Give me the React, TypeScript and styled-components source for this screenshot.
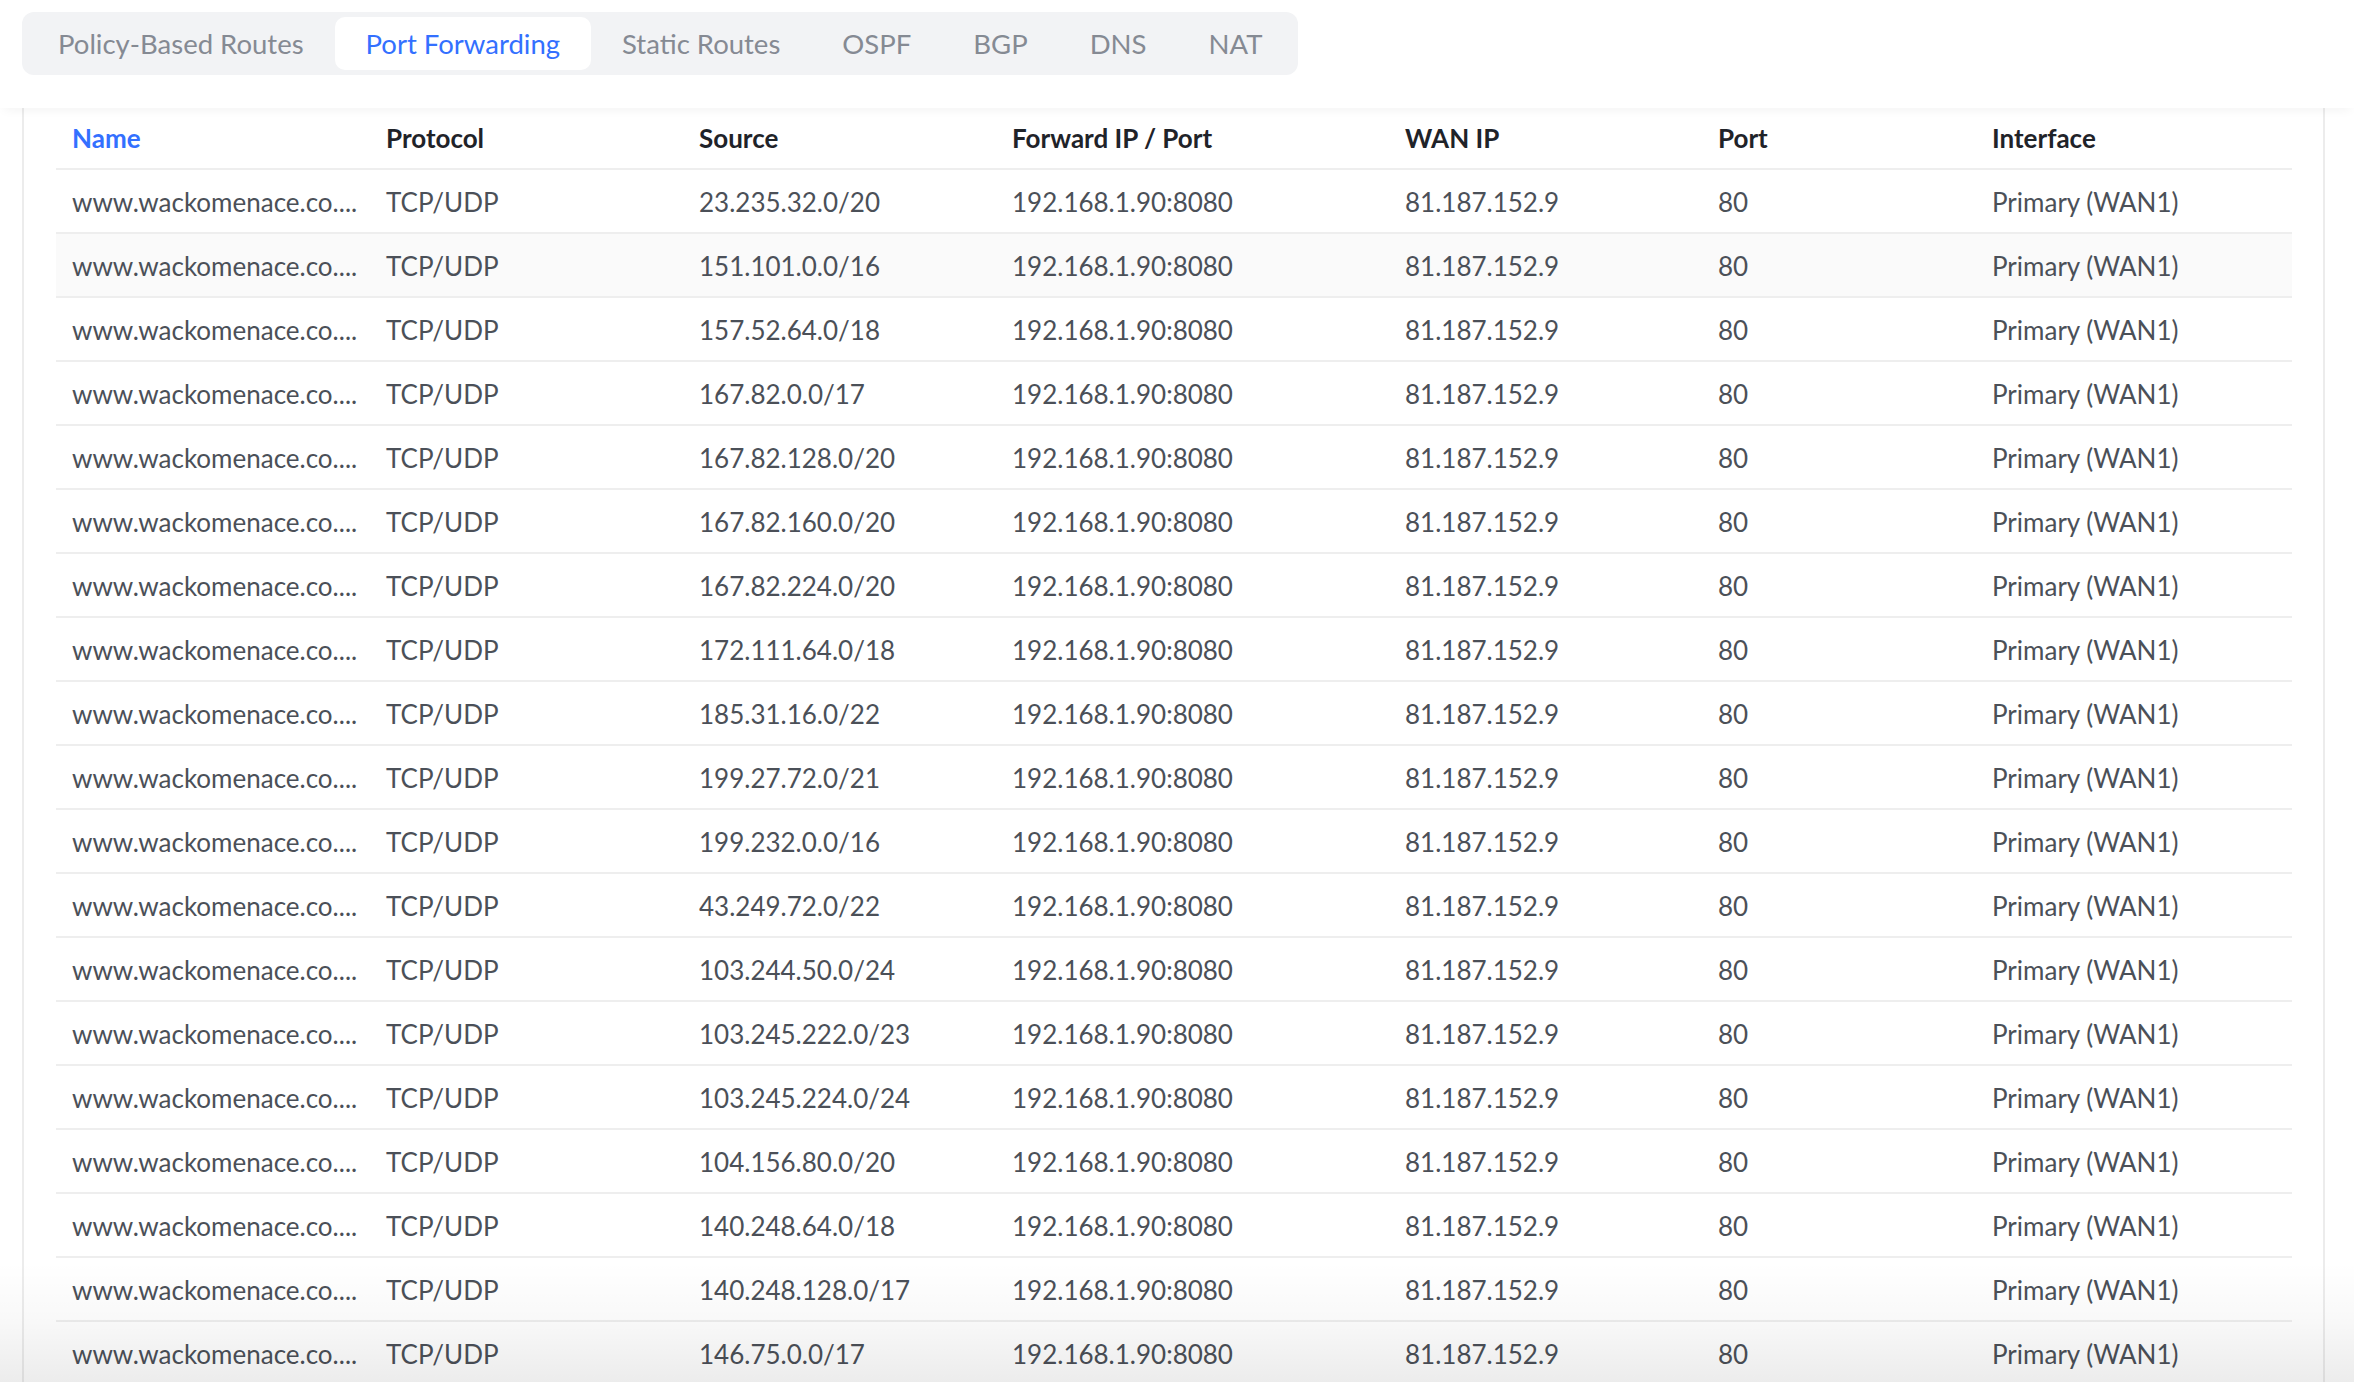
import React from "react";
import styled, { createGlobalStyle } from "styled-components";

const GlobalStyle = createGlobalStyle`
  html, body {
    margin: 0;
    padding: 0;
    background: #ffffff;
    font-family: Lato, "Open Sans", "Noto Sans", sans-serif;
    -webkit-font-smoothing: antialiased;
  }
  * { box-sizing: border-box; }
`;

const Page = styled.div`
  position: relative;
  width: 100%;
  height: 1382px;
  overflow: hidden;
  background: #ffffff;
`;

const TopBar = styled.header`
  position: relative;
  z-index: 1;
  height: 108px;
  padding: 12px 22px 0;
  background: #ffffff;
  box-shadow: 0 6px 10px -4px rgba(0, 0, 0, 0.05);
`;

const Tabs = styled.nav`
  display: inline-flex;
  align-items: center;
  height: 63px;
  padding: 5px;
  border-radius: 12px;
  background: #f2f3f5;
`;

const Tab = styled.button<{ $active?: boolean }>`
  height: 53px;
  padding: 0 31px;
  border: none;
  border-radius: 10px;
  background: ${(p) => (p.$active ? "#ffffff" : "transparent")};
  color: ${(p) => (p.$active ? "#3370ff" : "#858a93")};
  font-family: inherit;
  font-size: 27.5px;
  font-weight: 400;
  cursor: pointer;
  white-space: nowrap;
`;

const Panel = styled.section`
  margin-left: 22px;
  width: 2303px;
  height: calc(1382px - 108px);
  padding: 0 31px 0 32px;
  border-left: 2px solid #ececec;
  border-right: 2px solid #ececec;
`;

const COLS = "314px 313px 313px 393px 313px 274px 316px";

const HeadRow = styled.div`
  display: grid;
  grid-template-columns: ${COLS};
  align-items: center;
  height: 62px;
  border-bottom: 2px solid #eeeeee;
`;

const HeadCell = styled.div<{ $sorted?: boolean }>`
  padding-left: 16px;
  font-size: 26px;
  font-weight: 700;
  color: ${(p) => (p.$sorted ? "#3370ff" : "#1f2329")};
  white-space: nowrap;
`;

const Row = styled.div<{ $hover?: boolean }>`
  display: grid;
  grid-template-columns: ${COLS};
  align-items: center;
  height: 64px;
  padding-top: 2px;
  border-bottom: 2px solid #eeeeee;
  background: ${(p) => (p.$hover ? "#fafafa" : "transparent")};
`;

const Cell = styled.div`
  padding-left: 16px;
  font-size: 26px;
  color: #4b5058;
  white-space: nowrap;
`;

const BottomFade = styled.div`
  position: absolute;
  left: 0;
  right: 0;
  bottom: 0;
  height: 120px;
  pointer-events: none;
  background: linear-gradient(to bottom, rgba(0, 0, 0, 0) 0%, rgba(0, 0, 0, 0.025) 45%, rgba(0, 0, 0, 0.075) 100%);
`;

const tabs = ["Policy-Based Routes", "Port Forwarding", "Static Routes", "OSPF", "BGP", "DNS", "NAT"];
const headers = ["Name", "Protocol", "Source", "Forward IP / Port", "WAN IP", "Port", "Interface"];
const sources = [
  "23.235.32.0/20",
  "151.101.0.0/16",
  "157.52.64.0/18",
  "167.82.0.0/17",
  "167.82.128.0/20",
  "167.82.160.0/20",
  "167.82.224.0/20",
  "172.111.64.0/18",
  "185.31.16.0/22",
  "199.27.72.0/21",
  "199.232.0.0/16",
  "43.249.72.0/22",
  "103.244.50.0/24",
  "103.245.222.0/23",
  "103.245.224.0/24",
  "104.156.80.0/20",
  "140.248.64.0/18",
  "140.248.128.0/17",
  "146.75.0.0/17",
];

export default function App() {
  return (
    <Page>
      <GlobalStyle />
      <TopBar>
        <Tabs>
          {tabs.map((t) => (
            <Tab key={t} $active={t === "Port Forwarding"}>
              {t}
            </Tab>
          ))}
        </Tabs>
      </TopBar>
      <Panel>
        <HeadRow>
          {headers.map((h) => (
            <HeadCell key={h} $sorted={h === "Name"}>
              {h}
            </HeadCell>
          ))}
        </HeadRow>
        {sources.map((s, i) => (
          <Row key={s} $hover={i === 1}>
            <Cell>www.wackomenace.co....</Cell>
            <Cell>TCP/UDP</Cell>
            <Cell>{s}</Cell>
            <Cell>192.168.1.90:8080</Cell>
            <Cell>81.187.152.9</Cell>
            <Cell>80</Cell>
            <Cell>Primary (WAN1)</Cell>
          </Row>
        ))}
      </Panel>
      <BottomFade />
    </Page>
  );
}
